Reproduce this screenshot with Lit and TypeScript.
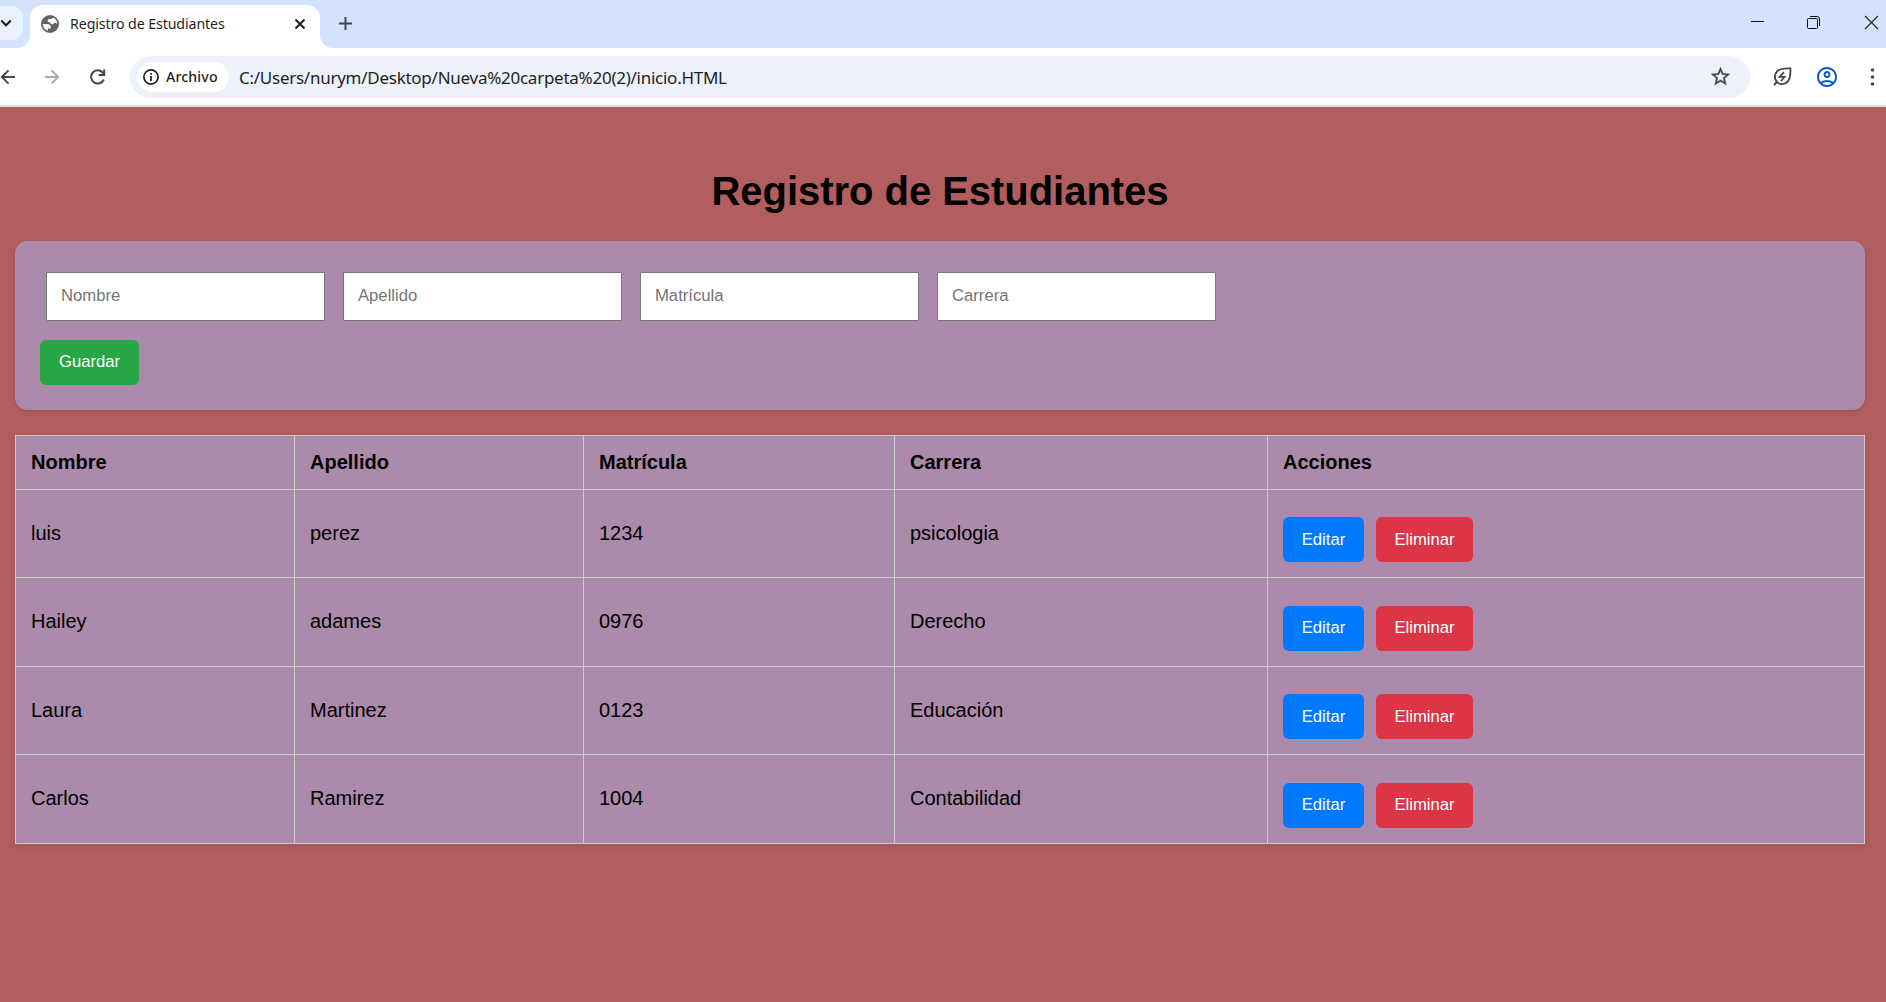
import { LitElement, html, css } from "lit";
import { customElement } from "lit/decorators.js";

@customElement("browser-chrome")
export class BrowserChrome extends LitElement {
  static styles = css`
    :host { display: block; font-family: "Noto Sans", "Open Sans", sans-serif; color: #1f1f1f; }
    svg { display: block; flex: none; overflow: visible; }
    .tabs { display: flex; height: 48px; background: #d3e3fd; overflow: hidden; }
    .search { width: 23px; height: 34px; margin-top: 6px; background: #e9f1fe; border-radius: 0 12px 12px 0; }
    .tab { position: relative; display: flex; align-items: center; box-sizing: border-box; width: 290px; height: 43px; margin: 5px 0 0 7px; padding: 0 15px 6px 11px; background: #fff; border-radius: 13px 13px 0 0; }
    .tab::before, .tab::after { content: ""; position: absolute; bottom: 0; width: 13px; height: 13px; }
    .tab::before { left: -13px; background: radial-gradient(circle at 0 0, transparent 12.5px, #fff 13.5px); }
    .tab::after { right: -13px; background: radial-gradient(circle at 100% 0, transparent 12.5px, #fff 13.5px); }
    .title { flex: 1; margin-left: 11px; font-size: 14.2px; line-height: 20px; letter-spacing: -0.1px; white-space: nowrap; }
    .plus { margin: 17px 0 0 19px; }
    .window { display: flex; margin: 16px 8px 0 auto; }
    .window svg + svg { margin-left: 43px; }
    .window svg + svg + svg { margin-left: 45px; }
    .bar { display: flex; align-items: center; height: 57px; background: #fff; border-bottom: 2px solid #dfe0e0; }
    .fwd { margin-left: 28px; }
    .reload { margin-left: 29px; }
    .omni { display: flex; align-items: center; box-sizing: border-box; width: 1620px; height: 42px; margin-left: 24px; padding: 0 20px 0 7px; background: #ecf1fa; border-radius: 21px; }
    .chip { display: flex; align-items: center; box-sizing: border-box; width: 92px; height: 30px; padding-left: 6px; border-radius: 15px; background: #fff; }
    .chip span { margin-left: 7px; font-size: 14.2px; font-weight: 500; letter-spacing: 0.12px; }
    .url { flex: 1; margin-left: 10px; padding-top: 2px; font-size: 17px; line-height: 24px; letter-spacing: -0.26px; white-space: nowrap; }
    .leaf { margin-left: 23px; }
    .user { margin-left: 25px; }
    .dots { margin-left: 33px; }
  `;

  render() {
    return html`
      <div class="tabs">
        <div class="search">
          <svg width="23" height="34" viewBox="0 0 23 34" fill="none" stroke="#1f1f1f" stroke-width="2.1"><path d="M1.2 14.6 L6 19.2 L10.8 14.6" /></svg>
        </div>
        <div class="tab">
          <svg width="18" height="18" viewBox="2 2 20 20"><circle cx="12" cy="12" r="10" fill="#5f6368" /><path fill="#fff" d="M4 12h4.400c3.400.02 4.940 1.730 4.600 5.130H9.500v2.470A8 8 0 0 1 4 12zM15.200 4.700A8 8 0 0 1 20 12v.300c-.5-.9-1.300-1.400-2.500-1.400-1.800 0-1.700 1.700-3.500 1.500-1.300-.2-1.100-1.900-2.400-2.100-1.500-.1-2.400-.7-2.300-1.900.1-1.300 1-1.900 2.400-1.900 1.700 0 3.300-.3 3.500-1.800z" /></svg>
          <span class="title">Registro de Estudiantes</span>
          <svg width="10" height="10" viewBox="0 0 10 10" stroke="#1f1f1f" stroke-width="2"><path d="M.5.5l9 9M9.500.5l-9 9" /></svg>
        </div>
        <svg class="plus" width="13" height="13" viewBox="0 0 13 13" stroke="#444746" stroke-width="2"><path d="M6.500 0v13M0 6.500h13" /></svg>
        <div class="window">
          <svg width="13" height="13" viewBox="0 0 13 13" stroke="#111" stroke-width="1"><path d="M0 5.500h13" /></svg>
          <svg width="13" height="13" viewBox="0 0 13 13" fill="none" stroke="#111" stroke-width="1"><rect x=".5" y="2.500" width="10" height="10" rx="1" /><path d="M3 .5h7a2.500 2.500 0 0 1 2.500 2.500v7" /></svg>
          <svg width="13" height="13" viewBox="0 0 13 13" stroke="#222" stroke-width="1.100"><path d="M0 0l13 13M13 0L0 13" /></svg>
        </div>
      </div>
      <div class="bar">
        <svg width="16" height="16" viewBox="0 0 16 16" fill="none" stroke="#444746" stroke-width="1.900"><path d="M15 8H2M8.500 1.300L1.800 8l6.700 6.700" /></svg>
        <svg class="fwd" width="16" height="16" viewBox="0 0 16 16" fill="none" stroke="#a9abab" stroke-width="1.900"><path d="M1 8h13M7.500 1.300L14.200 8l-6.700 6.700" /></svg>
        <svg class="reload" width="17" height="16" viewBox="0 0 17 16" fill="none" stroke="#444746" stroke-width="2"><path d="M14.800 10.500A6.600 6.600 0 1 1 13.600 3.500L15 5" /><path d="M15.200.5V6H9.700" /></svg>
        <div class="omni">
          <div class="chip">
            <svg width="16" height="16" viewBox="0 0 16 16" fill="none" stroke="#1f1f1f" stroke-width="1.700"><circle cx="8" cy="8" r="7.100" /><path d="M8 7v5M8 4v1.800" /></svg>
            <span>Archivo</span>
          </div>
          <span class="url">C:/Users/nurym/Desktop/Nueva%20carpeta%20(2)/inicio.HTML</span>
          <svg width="19" height="19" viewBox="2 2 20 20" fill="#444746"><path stroke="#444746" stroke-width=".3" d="M22 9.240l-7.190-.62L12 2 9.190 8.630 2 9.240l5.460 4.730L5.820 21 12 17.270 18.180 21l-1.630-7.030L22 9.240zM12 15.400l-3.760 2.270 1-4.280-3.320-2.880 4.380-.38L12 6.100l1.710 4.040 4.380.38-3.320 2.880 1 4.280L12 15.400z" /></svg>
        </div>
        <svg class="leaf" width="19" height="19" viewBox="0 0 19 19" fill="none" stroke="#444746" stroke-width="1.900"><path d="M1 18L4 15C1 12 1.200 7 4.500 4 7.500 1.300 12 1.200 17.400 1.400 17.600 7 17.500 11.500 14.700 14.600 11.800 17.700 7 18 4 15" /><path d="M11 5.200L6.600 9.900H11.600L8 14.200" stroke-width="1.700" /></svg>
        <svg class="user" width="20" height="20" viewBox="2 2 20 20" fill="#0b57d0"><path d="M12 2C6.480 2 2 6.480 2 12s4.480 10 10 10 10-4.480 10-10S17.520 2 12 2zM7.350 18.500C8.660 17.560 10.260 17 12 17s3.340.56 4.650 1.500C15.340 19.440 13.740 20 12 20s-3.340-.56-4.650-1.500zm10.790-1.380C16.450 15.800 14.320 15 12 15s-4.450.8-6.140 2.120C4.700 15.730 4 13.950 4 12c0-4.420 3.580-8 8-8s8 3.580 8 8c0 1.950-.7 3.730-1.860 5.120z" /><path d="M12 6c-1.930 0-3.500 1.570-3.500 3.500S10.070 13 12 13s3.500-1.570 3.500-3.500S13.930 6 12 6zm0 5c-.83 0-1.500-.67-1.500-1.500S11.170 8 12 8s1.500.67 1.500 1.500S12.830 11 12 11z" /></svg>
        <svg class="dots" width="5" height="18" viewBox="0 0 5 18" fill="#444746"><circle cx="2.500" cy="2" r="1.800" /><circle cx="2.500" cy="9" r="1.800" /><circle cx="2.500" cy="16" r="1.800" /></svg>
      </div>
    `;
  }
}

const FIELDS = ["Nombre", "Apellido", "Matrícula", "Carrera"];
const STUDENTS = [
  ["luis", "perez", "1234", "psicologia"],
  ["Hailey", "adames", "0976", "Derecho"],
  ["Laura", "Martinez", "0123", "Educación"],
  ["Carlos", "Ramirez", "1004", "Contabilidad"],
];

@customElement("app-root")
export class AppRoot extends LitElement {
  static styles = css`
    :host { display: flex; flex-direction: column; height: 1002px; overflow: hidden; background: #b25e5e; color: #000; font-family: "Liberation Sans", Arial, sans-serif; font-size: 20px; }
    main { padding: 61px 21px 0 15px; }
    h1 { margin: 0 0 27px; font-size: 40px; line-height: 46px; letter-spacing: -0.04px; text-align: center; }
    .card { box-sizing: border-box; height: 169px; padding: 31px 25px 0 25px; border-radius: 12.5px; background: #ab8aab; box-shadow: 0 2px 6px rgba(0, 0, 0, 0.12); }
    .fields { display: flex; gap: 18px; padding-left: 6px; }
    input { box-sizing: border-box; width: 279px; height: 49px; margin: 0; padding: 0 14px 2px; border: 1px solid #767676; border-radius: 1px; background: #fff; font: 16.67px "Liberation Sans", Arial, sans-serif; }
    input::placeholder { color: #757575; }
    button { display: block; box-sizing: border-box; height: 45px; margin: 0; padding: 0 0 2px; border: 0; border-radius: 6px; color: #fff; font: 16.67px "Liberation Sans", Arial, sans-serif; text-align: center; }
    .save { width: 99px; margin-top: 19px; background: #28a745; }
    .edit { width: 81px; background: #007bff; }
    .remove { width: 97px; background: #dc3545; }
    .table { display: grid; grid-template-columns: 279px 289px 311px 373px 597px; grid-template-rows: 54px 88px 89px 88px 89px; margin-top: 25px; border: 1px solid #ccc; border-width: 1px 0 0 1px; background: #ab8aab; box-shadow: 0 2px 6px rgba(0, 0, 0, 0.12); }
    .cell { display: flex; align-items: center; padding: 0 15px 1px; border: 1px solid #ccc; border-width: 0 1px 1px 0; }
    .head { font-weight: bold; }
    .actions { align-items: flex-end; gap: 12px; padding-bottom: 15px; }
    .odd button { padding: 1px 0; }
  `;

  render() {
    return html`
      <browser-chrome></browser-chrome>
      <main>
        <h1>Registro de Estudiantes</h1>
        <div class="card">
          <div class="fields">${FIELDS.map((f) => html`<input placeholder=${f} />`)}</div>
          <button class="save">Guardar</button>
        </div>
        <div class="table">
          ${[...FIELDS, "Acciones"].map((f) => html`<div class="cell head">${f}</div>`)}
          ${STUDENTS.map((row, i) => html`
            ${row.map((value) => html`<div class="cell">${value}</div>`)}
            <div class="cell actions ${i % 2 === 0 ? "odd" : ""}"><button class="edit">Editar</button><button class="remove">Eliminar</button></div>
          `)}
        </div>
      </main>
    `;
  }
}
